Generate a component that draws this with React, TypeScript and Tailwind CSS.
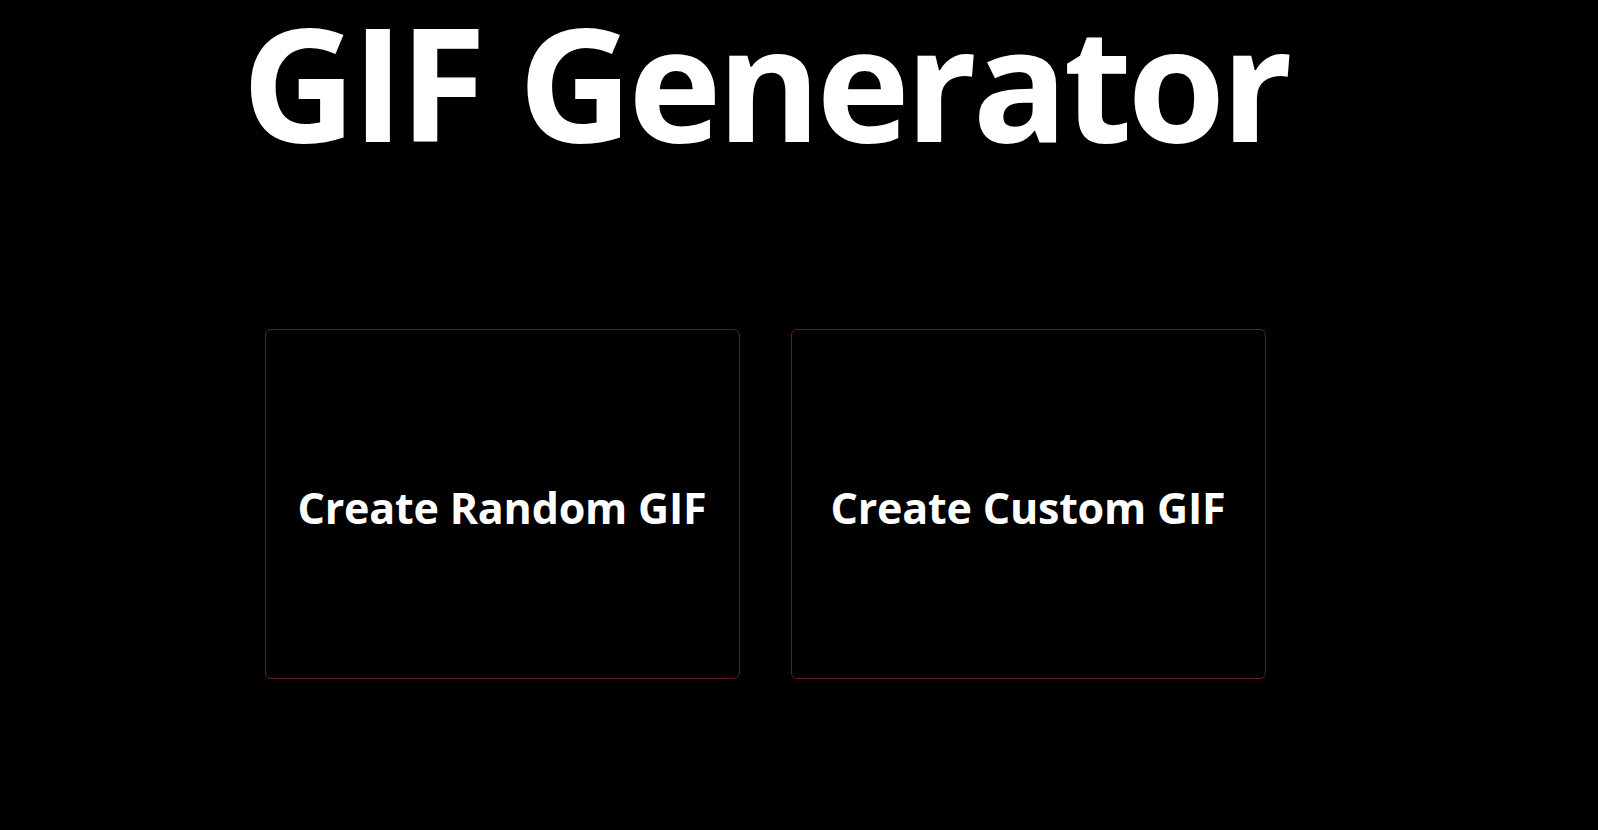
import React from 'react';

const options = ['Create Random GIF', 'Create Custom GIF'];

export default function App() {
    return (
        <div className="min-h-[830px] w-full bg-black text-white" style={{ fontFamily: '"Open Sans", "Noto Sans", sans-serif' }}>
            <div className="flex w-[1530px] flex-col items-center">
                <h1 className="mt-[2px] px-4 text-[158px] font-bold leading-none tracking-[-4.5px]">
                    GIF Generator
                </h1>
                <div className="mt-[169px] flex gap-[51px]">
                    {options.map(label => (
                        <button
                            key={label}
                            className="flex h-[350px] w-[475px] items-center justify-center rounded-md border border-[#641c23] bg-black pt-2 text-[43px] font-bold tracking-[-0.2px] text-white"
                        >
                            {label}
                        </button>
                    ))}
                </div>
            </div>
        </div>
    );
}
